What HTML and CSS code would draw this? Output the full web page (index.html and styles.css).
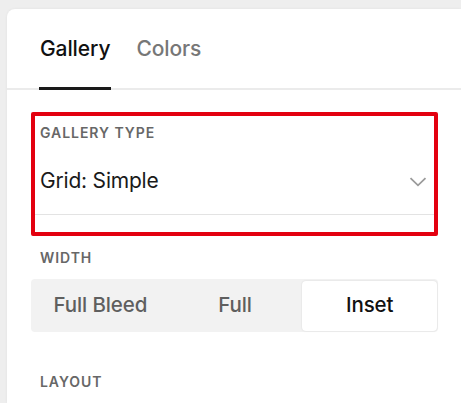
FILE: index.html
```html
<!DOCTYPE html>
<html>
<head>
<meta charset="utf-8">
<link rel="stylesheet" href="styles.css">
</head>
<body>
<div class="panel">
  <div class="tabs">
    <div class="tab active">Gallery</div>
    <div class="tab">Colors</div>
  </div>
  <div class="content">
    <div class="field highlight">
      <div class="label">GALLERY TYPE</div>
      <div class="select">
        <span class="value">Grid: Simple</span>
        <svg class="chev" width="18" height="10" viewBox="0 0 18 10"><path d="M1.5 1.2 L9 8.3 L16.5 1.2" fill="none" stroke="#9b9b9b" stroke-width="1.8"/></svg>
      </div>
    </div>
    <div class="label plain">WIDTH</div>
    <div class="segmented">
      <div class="seg">Full Bleed</div>
      <div class="seg">Full</div>
      <div class="seg selected">Inset</div>
    </div>
    <div class="label plain layout">LAYOUT</div>
  </div>
</div>
</body>
</html>
```
FILE: styles.css
```css
* { box-sizing: border-box; }
html, body { margin: 0; height: 100%; }
body {
  background: #eeeeee;
  font-family: Inter, "Liberation Sans", sans-serif;
  padding: 9px 0 0 7px;
  overflow: hidden;
}
.panel {
  background: #fff;
  border-top-left-radius: 8px;
  height: 100%;
  box-shadow: 0 0 3px rgba(0,0,0,0.06);
}
.tabs {
  display: flex;
  gap: 24px;
  padding-left: 32px;
  border-bottom: 2px solid #ebebeb;
  height: 81px;
}
.tab {
  font-size: 21px;
  font-weight: 500;
  line-height: 24px;
  padding: 28px 1px 0;
  color: #777;
  margin-bottom: -2px;
  border-bottom: 3px solid transparent;
  letter-spacing: -0.1px;
}
.tab.active {
  color: #111;
  border-bottom-color: #1a1a1a;
}
.content {
  padding: 22px 23px 0 24px;
}
.field.highlight {
  border: 4px solid #e3000f;
  height: 124px;
  border-radius: 2px;
}
.label {
  font-size: 14px;
  font-weight: 600;
  letter-spacing: 0.95px;
  line-height: 16px;
  color: #676767;
}
.field .label {
  padding: 9px 0 0 5px;
}
.select {
  display: flex;
  align-items: center;
  justify-content: space-between;
  margin-top: 28px;
  padding: 0 7px 21px 5px;
  border-bottom: 1px solid #e3e3e3;
}
.value {
  font-size: 21px;
  line-height: 24px;
  color: #1a1a1a;
  letter-spacing: -0.2px;
}
.chev { display: block; margin-top: 2px; }
.label.plain {
  padding-left: 9px;
  margin-top: 14px;
}
.segmented {
  display: grid;
  grid-template-columns: 1fr 1fr 1fr;
  background: #f2f2f2;
  border-radius: 4px;
  padding: 2px 1px 1px 2px;
  margin-top: 13px;
  height: 53px;
}
.seg {
  display: flex;
  align-items: center;
  justify-content: center;
  font-size: 20.5px;
  font-weight: 500;
  color: #5f5f5f;
  letter-spacing: -0.1px;
  padding-bottom: 3px;
}
.seg.selected {
  background: #fff;
  color: #111;
  border-radius: 4px;
  box-shadow: 0 0 2px rgba(0,0,0,0.12);
}
.label.layout {
  margin-top: 42px;
}
```
